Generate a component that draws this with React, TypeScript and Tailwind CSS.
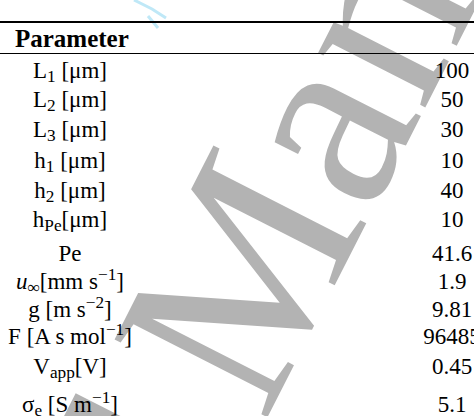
const rows: { label: React.ReactNode; value: string; h: string }[] = [
  { label: <>L<sub>1</sub> [μm]</>, value: "100", h: "h-[29px]" },
  { label: <>L<sub>2</sub> [μm]</>, value: "50", h: "h-[30px]" },
  { label: <>L<sub>3</sub> [μm]</>, value: "30", h: "h-[31px]" },
  { label: <>h<sub>1</sub> [μm]</>, value: "10", h: "h-[30px]" },
  { label: <>h<sub>2</sub> [μm]</>, value: "40", h: "h-[29px]" },
  { label: <>h<sub>Pe</sub>[μm]</>, value: "10", h: "h-[34px]" },
  { label: <>Pe</>, value: "41.6", h: "h-[28px]" },
  {
    label: (
      <>
        <i>u</i>
        <sub>∞</sub>[mm s<sup>−1</sup>]
      </>
    ),
    value: "1.9",
    h: "h-[28px]",
  },
  { label: <>g [m s<sup>−2</sup>]</>, value: "9.81", h: "h-[27px]" },
  { label: <>F [A s mol<sup>−1</sup>]</>, value: "96485", h: "h-[30px]" },
  { label: <>V<sub>app</sub>[V]</>, value: "0.45", h: "h-[38px]" },
  { label: <>σ<sub>e</sub> [S m<sup>−1</sup>]</>, value: "5.1", h: "h-[30px]" },
];

function Watermark() {
  return (
    <svg className="absolute inset-0" width="474" height="416" viewBox="0 0 474 416">
      <g transform="translate(264 424) rotate(-63)" fill="#b3b3b3" fontFamily="'Liberation Serif', serif" fontSize="262">
        <text x="-40" y="0" textAnchor="end">Accepted</text>
        <text x="0" y="0">Manuscript</text>
      </g>
      <path d="M134 0 L152 9 L166 18 M148 16 L158 28" stroke="#bfe8f7" strokeWidth="3" fill="none" />
    </svg>
  );
}

export default function App() {
  return (
    <div className="relative w-[474px] h-[416px] overflow-hidden bg-white" style={{ fontFamily: "'Liberation Serif', 'Times New Roman', serif" }}>
      <Watermark />
      <div className="relative w-[490px] pt-[21px] text-black">
        <div className="h-[2px] w-[474px] bg-black" />
        <div className="h-[30px] pl-[15px] text-[25px] font-bold leading-[31px]">Parameter</div>
        <div className="h-[1px] w-[474px] bg-black" />
        <div className="mt-[1px]">
          {rows.map((r, i) => (
            <div key={i} className={`grid grid-cols-[140px_1fr_76px] items-start text-[23px] leading-[32px] ${r.h}`}>
              <div className="text-center whitespace-nowrap">{r.label}</div>
              <div />
              <div className="text-center">{r.value}</div>
            </div>
          ))}
        </div>
      </div>
    </div>
  );
}
